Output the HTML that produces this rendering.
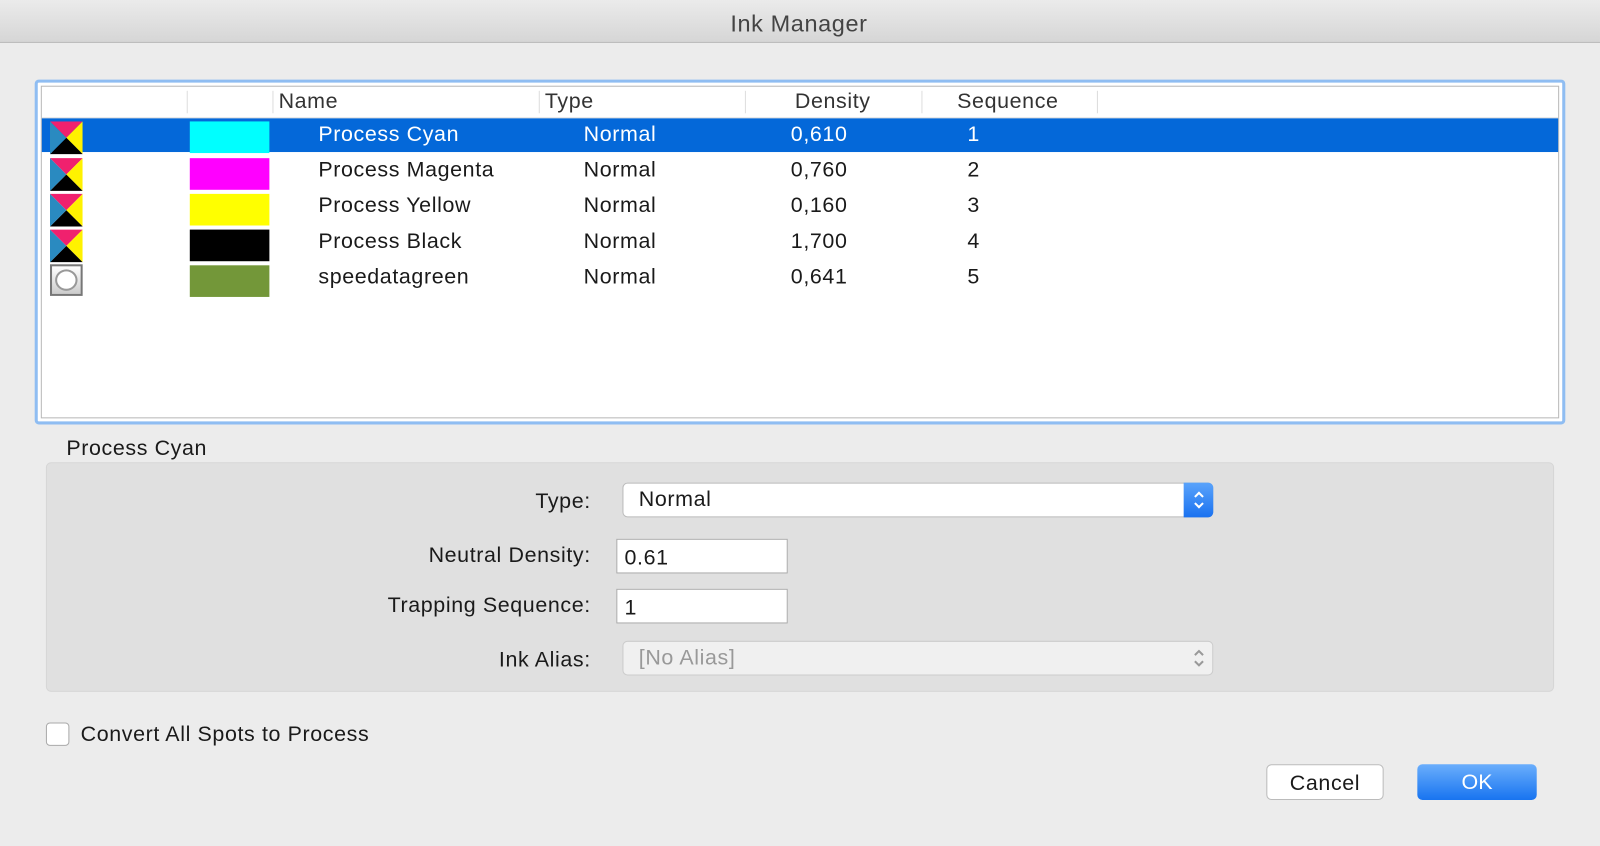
<!DOCTYPE html>
<html><head><style>
*{margin:0;padding:0;box-sizing:border-box}
body{width:1600px;height:846px;background:#ececec;font-family:"Liberation Sans",sans-serif;overflow:hidden;color:#1a1a1a}
#w{position:absolute;left:0;top:0;width:1568px;height:829px;transform:scale(1.0204);transform-origin:0 0}
.a{position:absolute}
.t{font-size:21px;letter-spacing:0.6px;white-space:nowrap}
</style></head><body><div id="w">
<div class="a" style="left:0;top:0;width:1568px;height:42px;background:linear-gradient(#ebebeb,#d6d6d6);border-bottom:1px solid #b5b5b5"></div>
<div class="a t" style="left:0;width:1566px;top:10px;text-align:center;color:#444;font-size:23px">Ink Manager</div>

<div class="a" style="left:34px;top:78px;width:1500px;height:338px;border:3px solid #8fbdf2;border-radius:4px;background:#fff"></div>
<div class="a" style="left:40px;top:84px;width:1488px;height:326px;border:1px solid #b8b8b8;background:#fff"></div>
<div class="a" style="left:183px;top:89px;width:1px;height:22px;background:#ddd"></div>
<div class="a" style="left:267px;top:89px;width:1px;height:22px;background:#ddd"></div>
<div class="a" style="left:528px;top:89px;width:1px;height:22px;background:#ddd"></div>
<div class="a" style="left:730px;top:89px;width:1px;height:22px;background:#ddd"></div>
<div class="a" style="left:903px;top:89px;width:1px;height:22px;background:#ddd"></div>
<div class="a" style="left:1075px;top:89px;width:1px;height:22px;background:#ddd"></div>
<div class="a" style="left:41px;top:115px;width:1486px;height:1px;background:#ddd"></div>
<div class="a t" style="left:273px;top:88px;color:#333">Name</div>
<div class="a t" style="left:534px;top:88px;color:#333">Type</div>
<div class="a t" style="left:779px;top:88px;color:#333">Density</div>
<div class="a t" style="left:938px;top:88px;color:#333">Sequence</div>
<div class="a" style="left:41px;top:116px;width:1486px;height:33px;background:#0468d9"></div>

<svg class="a" style="left:49px;top:119px" width="32" height="138" viewBox="0 0 32 138">
<g id="ic"><polygon points="0,0 32,0 16,16" fill="#f0216e"/><polygon points="32,0 32,32 16,16" fill="#fff200"/><polygon points="0,32 32,32 16,16" fill="#000"/><polygon points="0,0 0,32 16,16" fill="#2a8ac0"/></g>
<use href="#ic" y="36"/><use href="#ic" y="71"/><use href="#ic" y="106"/>
</svg>
<div class="a" style="left:49px;top:259px;width:32px;height:31px;border:2px solid #777;background:linear-gradient(#fff,#ccc)"><div style="margin:3px;width:22px;height:21px;border-radius:50%;border:2px solid #999;background:#fff"></div></div>

<div class="a" style="left:186px;top:119px;width:78px;height:31px;background:#00ffff"></div>
<div class="a" style="left:186px;top:155px;width:78px;height:31px;background:#ff00ff"></div>
<div class="a" style="left:186px;top:190px;width:78px;height:31px;background:#ffff00"></div>
<div class="a" style="left:186px;top:225px;width:78px;height:31px;background:#000"></div>
<div class="a" style="left:186px;top:260px;width:78px;height:31px;background:#739739"></div>

<div class="a t" style="left:312px;top:120px;color:#fff">Process Cyan</div>
<div class="a t" style="left:572px;top:120px;color:#fff">Normal</div>
<div class="a t" style="left:775px;top:120px;color:#fff">0,610</div>
<div class="a t" style="left:948px;top:120px;color:#fff">1</div>
<div class="a t" style="left:312px;top:155px">Process Magenta</div><div class="a t" style="left:572px;top:155px">Normal</div><div class="a t" style="left:775px;top:155px">0,760</div><div class="a t" style="left:948px;top:155px">2</div>
<div class="a t" style="left:312px;top:190px">Process Yellow</div><div class="a t" style="left:572px;top:190px">Normal</div><div class="a t" style="left:775px;top:190px">0,160</div><div class="a t" style="left:948px;top:190px">3</div>
<div class="a t" style="left:312px;top:225px">Process Black</div><div class="a t" style="left:572px;top:225px">Normal</div><div class="a t" style="left:775px;top:225px">1,700</div><div class="a t" style="left:948px;top:225px">4</div>
<div class="a t" style="left:312px;top:260px">speedatagreen</div><div class="a t" style="left:572px;top:260px">Normal</div><div class="a t" style="left:775px;top:260px">0,641</div><div class="a t" style="left:948px;top:260px">5</div>

<div class="a t" style="left:65px;top:428px">Process Cyan</div>
<div class="a" style="left:45px;top:453px;width:1478px;height:225px;background:#e0e0e0;border:1px solid #d6d6d6;border-radius:5px"></div>

<div class="a t" style="right:989px;top:480px">Type:</div>
<div class="a" style="left:610px;top:473px;width:579px;height:34px;background:#fff;border:1px solid #bbb;border-radius:5px"></div>
<div class="a" style="left:1160px;top:473px;width:29px;height:34px;background:linear-gradient(#5aa3fb,#1a72f0);border-radius:0 5px 5px 0"></div>
<svg class="a" style="left:1166px;top:479px" width="18" height="22"><path d="M5 8 L9 4 L13 8 M5 14 L9 18 L13 14" stroke="#fff" stroke-width="2" fill="none"/></svg>
<div class="a t" style="left:626px;top:478px">Normal</div>

<div class="a t" style="right:989px;top:533px">Neutral Density:</div>
<div class="a" style="left:604px;top:528px;width:168px;height:34px;background:#fff;border:1px solid #aaa"></div>
<div class="a t" style="left:612px;top:535px">0.61</div>
<div class="a t" style="right:989px;top:582px">Trapping Sequence:</div>
<div class="a" style="left:604px;top:577px;width:168px;height:34px;background:#fff;border:1px solid #aaa"></div>
<div class="a t" style="left:612px;top:584px">1</div>

<div class="a t" style="right:989px;top:635px">Ink Alias:</div>
<div class="a" style="left:610px;top:628px;width:579px;height:34px;background:#f0f0f0;border:1px solid #ccc;border-radius:5px"></div>
<div class="a t" style="left:626px;top:633px;color:#999">[No Alias]</div>
<svg class="a" style="left:1166px;top:634px" width="18" height="22"><path d="M5 8 L9 4 L13 8 M5 14 L9 18 L13 14" stroke="#999" stroke-width="2" fill="none"/></svg>

<div class="a" style="left:45px;top:708px;width:23px;height:23px;background:#fff;border:1px solid #aaa;border-radius:4px"></div>
<div class="a t" style="left:79px;top:708px">Convert All Spots to Process</div>

<div class="a" style="left:1241px;top:749px;width:115px;height:35px;background:#fff;border:1px solid #bbb;border-radius:5px;text-align:center;font-size:21px;letter-spacing:0.6px;line-height:35px">Cancel</div>
<div class="a" style="left:1389px;top:749px;width:117px;height:35px;background:linear-gradient(#6aaefc,#1874f0);border-radius:5px;text-align:center;font-size:21px;line-height:35px;color:#fff">OK</div>
</div></body></html>
